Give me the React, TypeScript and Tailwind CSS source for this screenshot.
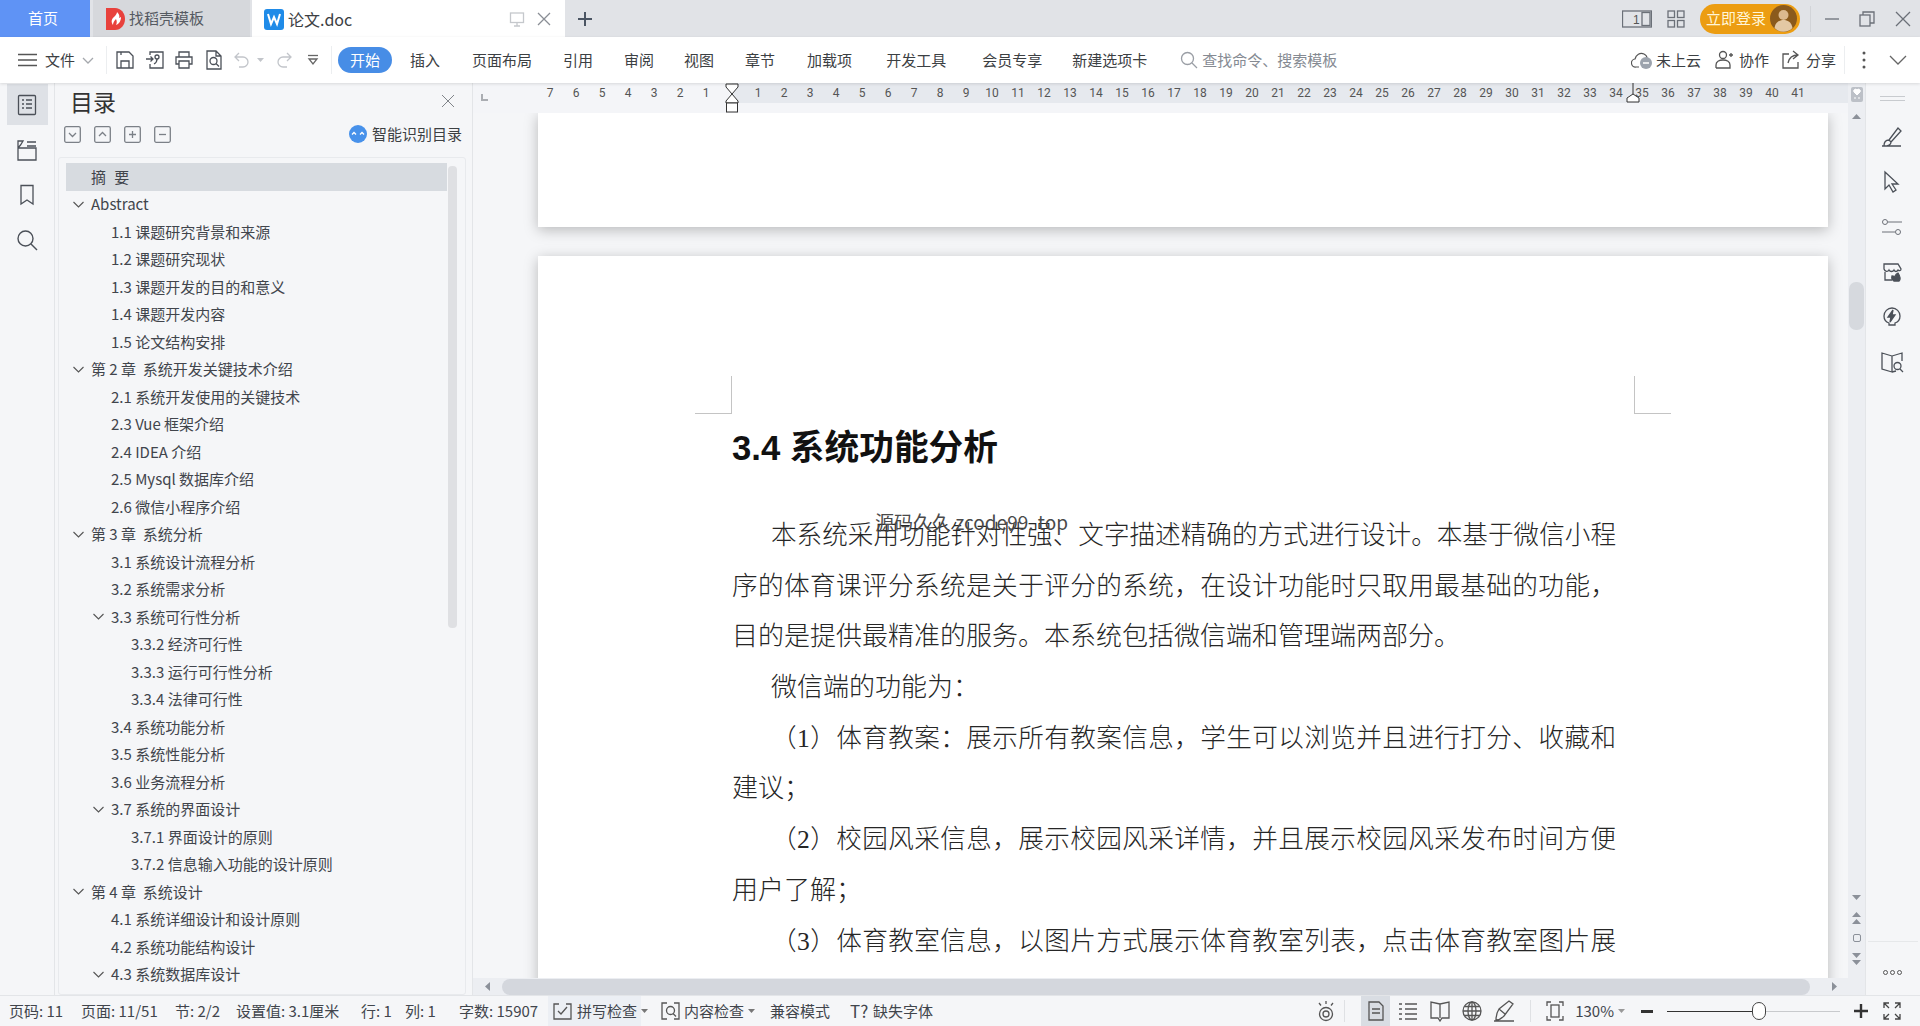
import React from "react";

const C = "#4b5058";
function I({ w = 20, h = 20, c = C, sw = 1.3, children, className = "" }: { w?: number; h?: number; c?: string; sw?: number; children: React.ReactNode; className?: string }) {
  return (
    <svg width={w} height={h} viewBox={`0 0 ${w} ${h}`} fill="none" stroke={c} strokeWidth={sw} className={`shrink-0 ${className}`}>
      {children}
    </svg>
  );
}

const toc: [number, boolean, string][] = [
  [0, false, "摘 要"],
  [0, true, "Abstract"],
  [1, false, "1.1 课题研究背景和来源"],
  [1, false, "1.2 课题研究现状"],
  [1, false, "1.3 课题开发的目的和意义"],
  [1, false, "1.4 课题开发内容"],
  [1, false, "1.5 论文结构安排"],
  [0, true, "第 2 章  系统开发关键技术介绍"],
  [1, false, "2.1 系统开发使用的关键技术"],
  [1, false, "2.3 Vue 框架介绍"],
  [1, false, "2.4 IDEA 介绍"],
  [1, false, "2.5 Mysql 数据库介绍"],
  [1, false, "2.6 微信小程序介绍"],
  [0, true, "第 3 章  系统分析"],
  [1, false, "3.1 系统设计流程分析"],
  [1, false, "3.2 系统需求分析"],
  [1, true, "3.3 系统可行性分析"],
  [2, false, "3.3.2 经济可行性"],
  [2, false, "3.3.3 运行可行性分析"],
  [2, false, "3.3.4 法律可行性"],
  [1, false, "3.4 系统功能分析"],
  [1, false, "3.5 系统性能分析"],
  [1, false, "3.6 业务流程分析"],
  [1, true, "3.7 系统的界面设计"],
  [2, false, "3.7.1 界面设计的原则"],
  [2, false, "3.7.2 信息输入功能的设计原则"],
  [0, true, "第 4 章  系统设计"],
  [1, false, "4.1 系统详细设计和设计原则"],
  [1, false, "4.2 系统功能结构设计"],
  [1, true, "4.3 系统数据库设计"],
];
const levelPad = ["pl-[7px]", "pl-[27px]", "pl-[47px]"];

const J = "w-[884px] whitespace-nowrap [text-align:justify] [text-align-last:justify] h-[50.7px] leading-[50.7px]";
const JI = "w-[884px] pl-[39px] whitespace-nowrap [text-align:justify] [text-align-last:justify] h-[50.7px] leading-[50.7px]";
const L = "text-[26px] whitespace-nowrap h-[50.7px] leading-[50.7px]";
const LI = "text-[26px] pl-[39px] whitespace-nowrap h-[50.7px] leading-[50.7px]";

function Caret({ c = "#777" }: { c?: string }) {
  return <svg width="7" height="4" viewBox="0 0 7 4" className="shrink-0"><path d="M0 0h7L3.5 4z" fill={c} /></svg>;
}

function Tabs() {
  return (
    <div className="h-[37px] flex bg-[#e1e3e7] text-[15px] items-stretch">
      <div className="w-[90px] mr-[3px] pr-[4px] bg-[#5f93f5] text-white flex items-center justify-center">首页</div>
      <div className="w-[157px] mr-[2px] bg-[#d6d8dc] text-[#555a62] flex items-center pl-[13px]">
        <svg width="19" height="24" viewBox="0 0 19 24" className="shrink-0">
          <path d="M0 1h9c6 0 10 5 10 11s-4 11-10 11H0z" fill="#e8413c" />
          <path d="M7 18c-2-3-2-6 2-9 1-1 2-3 2-4 2 2 3 4 2 6l2-1c0 4-2 7-5 8 1-2 1-4 0-6-2 2-3 4-3 6z" fill="#fff" />
        </svg>
        <span className="ml-[4px]">找稻壳模板</span>
      </div>
      <div className="w-[313px] bg-white text-[#3c4043] flex items-center pl-[12px]">
        <svg width="20" height="24" viewBox="0 0 20 24" className="shrink-0">
          <rect y="2" width="20" height="21" rx="3" fill="#1f8be8" />
          <path d="M4 7l3 10 3-7 3 7 3-10" fill="none" stroke="#fff" strokeWidth="2" />
        </svg>
        <span className="ml-[4px] text-[16px]">论文.doc</span>
        <I w={16} h={16} c="#c5c8cc" className="ml-[157px]"><rect x="1.5" y="2" width="13" height="9.5" /><path d="M8 11.5V15M5 15h6" /></I>
        <I w={16} h={16} c="#8a8e95" className="ml-[11px]"><path d="M2 2l12 12M14 2L2 14" /></I>
      </div>
      <div className="ml-[13px] flex items-center">
        <I w={14} h={14} c="#4b5563" sw={2}><path d="M7 0v14M0 7h14" /></I>
      </div>
      <div className="ml-auto pr-[9px] flex items-center">
        <I w={30} h={18} c="#6b7078">
          <rect x="0.5" y="1" width="29" height="16" />
          <rect x="20" y="2.5" width="8" height="13" />
          <text x="11" y="14" fontSize="12" fill="#555" stroke="none" fontFamily="Liberation Sans">1</text>
        </I>
        <I w={18} h={18} c="#6b7078" className="ml-[15px]">
          <rect x="1" y="1" width="6.5" height="6.5" /><rect x="10.5" y="1" width="6.5" height="6.5" /><rect x="1" y="10.5" width="6.5" height="6.5" /><rect x="10.5" y="10.5" width="6.5" height="6.5" />
        </I>
        <div className="ml-[15px] w-[100px] h-[30px] rounded-[15px] bg-[#ec9d12] flex items-center pl-[6px] text-[15px] text-[#fff6d8]">
          <span className="whitespace-nowrap">立即登录</span>
          <svg width="27" height="27" viewBox="0 0 27 27" className="ml-[4px] shrink-0">
            <circle cx="13.5" cy="13.5" r="13.5" fill="#8b5a1c" />
            <circle cx="13.5" cy="10" r="5" fill="#dcb98e" />
            <path d="M4.5 23c1-6 5-8 9-8s8 2 9 8c-5 5-13 5-18 0z" fill="#e3c8a4" />
          </svg>
        </div>
        <div className="ml-[10px] w-px h-[26px] bg-[#d2d4d8]" />
        <I w={14} h={14} c="#6b7078" className="ml-[14px]"><path d="M0 7h14" /></I>
        <I w={16} h={16} c="#6b7078" className="ml-[20px]"><rect x="1" y="4" width="10" height="11" /><path d="M4 4V1h11v11h-4" /></I>
        <I w={16} h={16} c="#6b7078" className="ml-[20px]"><path d="M1 1l14 14M15 1L1 15" /></I>
      </div>
    </div>
  );
}

function Toolbar() {
  const gray = "#c2c5ca";
  return (
    <div className="relative z-10 h-[46px] bg-white flex items-center pl-[18px] pr-[13px] text-[15px] text-[#3c4043] whitespace-nowrap shadow-[0_1px_3px_rgba(0,0,0,0.12)]">
      <I w={19} h={14} c="#555"><path d="M0 1.5h19M0 7h19M0 12.5h19" /></I>
      <span className="ml-[8px]">文件</span>
      <I w={12} h={7} c="#a5a8ad" className="ml-[7px]"><path d="M1 1l5 5 5-5" /></I>
      <div className="ml-[12px] w-px h-[28px] bg-[#eceef0]" />
      <I className="ml-[8px]"><path d="M2 2h12l4 4v12H2zM6 18v-7h8v7M6 2v3" /></I>
      <I className="ml-[10px]"><path d="M5 5V2h13v16H5v-4M1 9h7m-2.5-2.5L8 9l-2.5 2.5" /><circle cx="12" cy="7" r="2" /><path d="M12 9c0 3-1 4-3 5" /></I>
      <I className="ml-[9px]"><path d="M5 7V2h10v5M5 14H2V7h16v7h-3M5 11h10v7H5z" /></I>
      <I className="ml-[10px]"><path d="M3 1h9l5 5v13H3zM12 1v5h5" /><circle cx="9.5" cy="11" r="3.5" /><path d="M12 13.5l3 3" /></I>
      <I className="ml-[8px]" c={gray}><path d="M7 3L3 7l4 4M3 7h8a5 5 0 0 1 0 10H7" /></I>
      <span className="ml-[5px]"><Caret c={gray} /></span>
      <I className="ml-[10px]" c={gray}><path d="M13 3l4 4-4 4M17 7H9a5 5 0 0 0 0 10h4" /></I>
      <I w={12} h={12} className="ml-[13px]" c="#666"><path d="M1 1.5h10" /><path d="M2 5h8l-4 5z" /></I>
      <div className="ml-[12px] w-px h-[28px] bg-[#eceef0]" />
      <div className="ml-[6px] w-[54px] h-[26px] rounded-[13px] bg-[#478de6] text-white flex items-center justify-center">开始</div>
      <span className="ml-[18px]">插入</span>
      <span className="ml-[32px]">页面布局</span>
      <span className="ml-[31px]">引用</span>
      <span className="ml-[31px]">审阅</span>
      <span className="ml-[30px]">视图</span>
      <span className="ml-[31px]">章节</span>
      <span className="ml-[32px]">加载项</span>
      <span className="ml-[34px]">开发工具</span>
      <span className="ml-[36px]">会员专享</span>
      <span className="ml-[30px]">新建选项卡</span>
      <I w={18} h={18} c="#9a9ea5" className="ml-[33px]"><circle cx="7.5" cy="7.5" r="6" /><path d="M12 12l5 5" /></I>
      <span className="ml-[4px] text-[#858a92]">查找命令、搜索模板</span>
      <div className="ml-auto flex items-center">
        <svg width="22" height="20" viewBox="0 0 22 20" fill="none" stroke="#555" strokeWidth="1.2" className="shrink-0">
          <path d="M8 17H5a4 4 0 0 1-1-8c1-4 5-7 9-5 2 1 3 2 3 4" />
          <circle cx="15" cy="13" r="6" fill="#9ca3ad" stroke="none" />
          <path d="M12 13h6" stroke="#fff" strokeWidth="1.5" />
        </svg>
        <span className="ml-[3px]">未上云</span>
        <I className="ml-[13px]" c="#555"><circle cx="9" cy="5" r="3.5" /><path d="M2 18v-3c0-3 3-5 7-5s7 2 7 5v3H2M15 5h4M17 3v4" /></I>
        <span className="ml-[5px]">协作</span>
        <I className="ml-[12px]" c="#555"><path d="M8 4H2v14h15v-6M12 1l5 4-5 4M17 5c-6 0-9 3-10 8" /></I>
        <span className="ml-[5px]">分享</span>
        <div className="ml-[8px] w-px h-[28px] bg-[#eceef0]" />
        <svg width="4" height="18" viewBox="0 0 4 18" className="ml-[17px] shrink-0"><circle cx="2" cy="2" r="1.5" fill="#555" /><circle cx="2" cy="9" r="1.5" fill="#555" /><circle cx="2" cy="16" r="1.5" fill="#555" /></svg>
        <I w={18} h={10} c="#666" className="ml-[23px]"><path d="M1 1l8 8 8-8" /></I>
      </div>
    </div>
  );
}

function Rail() {
  return (
    <div className="w-[55px] shrink-0 border-r border-[#e3e5e8] flex flex-col items-center pt-[1px] gap-[4px]">
      <div className="w-[41px] h-[41px] bg-[#dee1e6] flex items-center justify-center">
        <I w={20} h={22} c="#4b5058"><rect x="1.5" y="1.5" width="17" height="19" rx="1" /><path d="M5 6h2M9 6h6M5 10h2M9 10h6M5 14h2M9 14h6" /></I>
      </div>
      <div className="w-[41px] h-[41px] flex items-center justify-center">
        <I w={22} h={22} c="#4b5058"><path d="M2 9h18v12H2zM2 9V2l5 0-2.5 4zM11 3h9M11 7h9" /></I>
      </div>
      <div className="w-[41px] h-[41px] flex items-center justify-center">
        <I w={16} h={22} c="#4b5058"><path d="M2 1.5h12V20l-6-4-6 4z" /></I>
      </div>
      <div className="w-[41px] h-[41px] flex items-center justify-center">
        <I w={22} h={22} c="#4b5058" sw={1.4}><circle cx="9.5" cy="9.5" r="7.5" /><path d="M15 15l6 6" /></I>
      </div>
    </div>
  );
}

function Sq({ d }: { d: string }) {
  return <I w={17} h={17} c="#7b8087"><rect x="0.7" y="0.7" width="15.6" height="15.6" rx="1.5" /><path d={d} /></I>;
}

function Panel() {
  return (
    <div className="w-[418px] shrink-0 border-r border-[#e3e5e8] flex flex-col h-full">
      <div className="h-[40px] shrink-0 flex items-center justify-between pl-[15px] pr-[16px] pb-[4px]">
        <span className="text-[23px] text-[#333]">目录</span>
        <I w={16} h={16} c="#808489" sw={1}><path d="M2 2l12 12M14 2L2 14" /></I>
      </div>
      <div className="h-[22px] shrink-0 flex items-center pl-[9px] pr-[10px] gap-[13px]">
        <Sq d="M5 7l3.5 3.5L12 7" />
        <Sq d="M5 10l3.5-3.5L12 10" />
        <Sq d="M8.5 5v7M5 8.5h7" />
        <Sq d="M5 8.5h7" />
        <div className="ml-auto flex items-center">
          <svg width="18" height="18" viewBox="0 0 18 18" className="shrink-0">
            <circle cx="9" cy="9" r="9" fill="#4791ea" />
            <path d="M3 9.5l2-2 2 2M11 9.5l2-2 2 2" stroke="#fff" strokeWidth="1.3" fill="none" />
          </svg>
          <span className="ml-[5px] text-[15px] text-[#3c4043] whitespace-nowrap">智能识别目录</span>
        </div>
      </div>
      <div className="mt-[12px] ml-[3px] w-[408px] flex-1 min-h-0 border border-[#e8eaed] rounded-[3px] flex pl-[7px] pt-[5px] overflow-hidden">
        <div className="w-[381px] shrink-0">
          {toc.map(([lv, chev, t], i) => (
            <div key={i} className={`h-[27.5px] flex items-center whitespace-pre text-[15px] text-[#41454c] ${levelPad[lv]} ${i === 0 ? "bg-[#d7dbe0] [word-spacing:5px]" : ""}`}>
              <span className="w-[12px] mr-[6px] shrink-0 flex items-center">
                {chev && <I w={11} h={7} c="#555" sw={1.1}><path d="M0.5 1l5 5 5-5" /></I>}
              </span>
              <span>{t}</span>
            </div>
          ))}
        </div>
        <div className="ml-[1px] mt-[3px] w-[9px] h-[462px] rounded-[4px] bg-[#dfe0e3]" />
      </div>
    </div>
  );
}

function Ruler() {
  const left = [7, 6, 5, 4, 3, 2, 1];
  const right = Array.from({ length: 41 }, (_, i) => i + 1);
  const cell = "w-[26px] shrink-0 text-center";
  return (
    <div className="relative h-[30px] shrink-0 bg-[#f4f5f8] flex items-start text-[12px] leading-[20px] text-[#555] font-['Roboto',sans-serif]">
      <div className="w-[64px] h-[20px] shrink-0 pl-[8px] pt-[11px]">
        <div className="w-[7px] h-[7px] border-l-2 border-b-2 border-[#aaadb2]" />
      </div>
      {left.map((n) => <div key={n} className={cell}>{n}</div>)}
      <div className="w-[13px] shrink-0" />
      <div className="flex-1 h-[20px] bg-[#e6e9ee] flex pl-[13px]">
        {right.map((n) => <div key={n} className={cell}>{n}</div>)}
      </div>
      <svg width="14" height="30" viewBox="0 0 14 30" fill="#fff" stroke="#333" strokeWidth="1" className="absolute left-[252px] top-0">
        <path d="M1 1h12v3l-6 7-6-7zM7 11l6 7v2H1v-2z" />
        <rect x="1.5" y="20" width="11" height="9" />
      </svg>
      <svg width="14" height="20" viewBox="0 0 14 20" fill="#fff" stroke="#333" strokeWidth="1" className="absolute left-[1153px] top-0">
        <path d="M7 0v11M7 11l6 4v4H1v-4z" />
      </svg>
    </div>
  );
}

function Page2() {
  return (
    <div className="mt-[29px] w-[1290px] h-[800px] bg-white shadow-[0_3px_13px_rgba(0,0,0,0.25)] pt-[120px]">
      <div className="flex justify-between px-[157px]">
        <div className="w-[37px] h-[38px] border-r border-b border-[#c4c4c4]" />
        <div className="w-[37px] h-[38px] border-l border-b border-[#c4c4c4]" />
      </div>
      <div className="relative pl-[194px] pt-[1px]">
        <div className="h-[66px] leading-[66px] text-[34.7px] font-bold text-[#111] whitespace-nowrap font-['Liberation_Sans','Noto_Sans_CJK_SC',sans-serif]">3.4 系统功能分析</div>
        <div className="mt-[30px] text-[25.6px] text-[#262626] font-light font-['Liberation_Serif','Noto_Sans_CJK_SC',serif]">
          <div className={JI}>本系统采用功能针对性强、文字描述精确的方式进行设计。本基于微信小程</div>
          <div className={J}>序的体育课评分系统是关于评分的系统，在设计功能时只取用最基础的功能，</div>
          <div className={L}>目的是提供最精准的服务。本系统包括微信端和管理端两部分。</div>
          <div className={LI}>微信端的功能为：</div>
          <div className={JI}>（1）体育教案：展示所有教案信息，学生可以浏览并且进行打分、收藏和</div>
          <div className={L}>建议；</div>
          <div className={JI}>（2）校园风采信息，展示校园风采详情，并且展示校园风采发布时间方便</div>
          <div className={L}>用户了解；</div>
          <div className={JI}>（3）体育教室信息，以图片方式展示体育教室列表，点击体育教室图片展</div>
        </div>
        <div className="absolute left-[337px] top-[95px] text-[19px] leading-[26px] text-[#4a4a4a] whitespace-nowrap font-['Noto_Sans_CJK_SC',sans-serif]">源码久久 zcode99. top</div>
      </div>
    </div>
  );
}

function Doc() {
  return (
    <div className="flex-1 min-w-0 flex h-full">
      <div className="w-[1375px] shrink-0 flex flex-col h-full">
        <Ruler />
        <div className="flex-1 min-h-0 overflow-hidden pl-[65px]">
          <div className="w-[1290px] h-[114px] bg-white shadow-[0_3px_13px_rgba(0,0,0,0.25)]" />
          <Page2 />
        </div>
        <div className="relative h-[17px] shrink-0 bg-[#eceef2] flex items-center pl-[12px]">
          <svg width="5" height="9" viewBox="0 0 5 9" className="shrink-0"><path d="M5 0v9L0 4.500z" fill="#8b9099" /></svg>
          <div className="ml-[12px] w-[1308px] h-[16px] rounded-[8px] bg-[#d4d7dd]" />
          <svg width="5" height="9" viewBox="0 0 5 9" className="ml-[22px] shrink-0"><path d="M0 0v9l5-4.500z" fill="#8b9099" /></svg>
        </div>
      </div>
      <div className="w-[17px] shrink-0 bg-[#eceef2] flex flex-col items-center">
        <svg width="12" height="15" viewBox="0 0 12 15" className="mt-[4px] shrink-0">
          <rect width="12" height="15" rx="2" fill="#bcc0c7" />
          <path d="M6 8L3 5a1.500 1.500 0 0 1 3-2 1.500 1.500 0 0 1 3 2zM3 11h2M7 11h2" fill="#fff" stroke="#fff" />
        </svg>
        <svg width="9" height="5" viewBox="0 0 9 5" className="mt-[12px] shrink-0"><path d="M0 5h9L4.500 0z" fill="#8b9099" /></svg>
        <div className="mt-[163px] w-[15px] h-[48px] rounded-[7px] bg-[#d6d9de]" />
        <svg width="9" height="5" viewBox="0 0 9 5" className="mt-[565px] shrink-0"><path d="M0 0h9L4.500 5z" fill="#8b9099" /></svg>
        <svg width="9" height="12" viewBox="0 0 9 12" className="mt-[12px] shrink-0"><path d="M0 5h9L4.500 0zM0 12h9L4.500 7z" fill="#8b9099" /></svg>
        <div className="mt-[10px] w-[8px] h-[8px] rounded-[2px] border border-[#8b9099]" />
        <svg width="9" height="12" viewBox="0 0 9 12" className="mt-[11px] shrink-0"><path d="M0 0h9L4.500 5zM0 7h9L4.500 12z" fill="#8b9099" /></svg>
      </div>
    </div>
  );
}

function RightRail() {
  const box = "h-[45px] flex items-center justify-center shrink-0";
  return (
    <div className="w-[55px] shrink-0 border-l border-[#e3e5e8] flex flex-col h-full pr-[2px]">
      <div className="h-[31.5px] shrink-0 flex flex-col items-center pt-[13px] gap-[2.5px]">
        <div className="w-[25px] h-px bg-[#c8cbcf]" />
        <div className="w-[25px] h-px bg-[#c8cbcf]" />
      </div>
      <div className={box}>
        <I w={22} h={22} c="#4b5058"><path d="M1 20h19M3 20c0-4 2-6 5-6l2 2c0 3-3 4-7 4zM8 14L17 2l3 3-10 11" /></I>
      </div>
      <div className={box}>
        <I w={18} h={24} c="#4b5058"><path d="M2 2v17l4-4 4 7 3-2-4-6h6z" /></I>
      </div>
      <div className={box}>
        <I w={22} h={20} c="#6d7178" sw={1}><circle cx="4" cy="5" r="2.500" /><path d="M7 5h14M1 15h13" /><circle cx="17" cy="15" r="2.500" /></I>
      </div>
      <div className={box}>
        <I w={22} h={22} c="#4b5058"><path d="M3 3h14l3 5c0 2-2 2-3 1-1 2-3 2-4 0-1 2-4 2-5 0-1 2-4 2-5-1zM4 11v8h7" /><path d="M13 20c0-4 2-7 4-8 2 3 3 6 1 8zM11 15c2 0 3 2 3 5-2 0-4-2-3-5z" fill="#4b5058" /></I>
      </div>
      <div className={box}>
        <I w={20} h={22} c="#4b5058"><path d="M7 19h6v-2c3-1 5-4 5-7a8 8 0 0 0-16 0c0 3 2 6 5 7z" /><path d="M11 4L6 11h3l-1 5 5-7h-3z" fill="#4b5058" /></I>
      </div>
      <div className={box}>
        <I w={24} h={22} c="#4b5058"><path d="M12 5L2 2v16l10 3V5zM12 5l10-3v8M12 21l4-1" /><circle cx="17.500" cy="15" r="3.500" /><path d="M20 18l3 3" /></I>
      </div>
      <div className="mt-auto h-px bg-[#e6e8ea] ml-[2px]" />
      <div className="h-[53px] shrink-0 flex items-center justify-center gap-[2px] pt-[8px]">
        <span className="w-[5px] h-[5px] rounded-full border border-[#555]" />
        <span className="w-[5px] h-[5px] rounded-full border border-[#555]" />
        <span className="w-[5px] h-[5px] rounded-full border border-[#555]" />
      </div>
    </div>
  );
}

function Status() {
  return (
    <div className="h-[31px] shrink-0 bg-[#f5f6f8] border-t border-[#e3e5e8] flex items-center pl-[9px] pr-[18px] text-[15px] text-[#41454c] whitespace-nowrap">
      <span className="w-[72px] shrink-0">页码: 11</span>
      <span className="w-[94px] shrink-0">页面: 11/51</span>
      <span className="w-[61px] shrink-0">节: 2/2</span>
      <span className="w-[125px] shrink-0">设置值: 3.1厘米</span>
      <span className="w-[44px] shrink-0">行: 1</span>
      <span className="w-[54px] shrink-0">列: 1</span>
      <span className="w-[89px] shrink-0">字数: 15907</span>
      <div className="w-[93px] h-[30px] shrink-0 bg-[#eceff4] flex items-center pl-[5px]">
        <I w={19} h={20} c="#555"><path d="M6 3H1v15h17V3h-5" /><path d="M5 10l3 3 6-7" /></I>
        <span className="ml-[5px]">拼写检查</span>
      </div>
      <span className="ml-[0px]"><Caret /></span>
      <I w={19} h={20} c="#555" className="ml-[13px]"><path d="M6 2H1v16h5M13 2h5v16h-5" /><circle cx="9.500" cy="9.500" r="4" /><path d="M12 12.500l3 3" /></I>
      <span className="ml-[4px]">内容检查</span>
      <span className="ml-[4px]"><Caret /></span>
      <span className="ml-[15px]">兼容模式</span>
      <span className="ml-[20px] w-[23px] text-[17px] shrink-0">T?</span>
      <span>缺失字体</span>
      <div className="ml-auto flex items-center">
        <I w={22} h={22} c="#555"><circle cx="11" cy="14" r="6.500" /><circle cx="11" cy="14" r="3" /><path d="M11 1v3M4 3l2 2.500M18 3l-2 2.500" /></I>
        <div className="ml-[7px] w-px h-[22px] bg-[#dfe1e4]" />
        <div className="ml-[16px] w-[29px] h-[30px] bg-[#d9dde3] flex items-center justify-center">
          <I w={16} h={20} c="#555"><path d="M1 1h10l4 4v14H1zM4 8h8M4 12h8" /></I>
        </div>
        <I w={20} h={20} c="#555" className="ml-[8px]"><path d="M1 3h3M7 3h12M1 8h3M7 8h12M1 13h3M7 13h12M1 18h3M7 18h12" /></I>
        <I w={20} h={22} c="#555" className="ml-[12px]"><path d="M10 4L1 2v16h7l2 3 2-3h7V2zM10 4v14" /></I>
        <I w={20} h={20} c="#555" className="ml-[12px]"><circle cx="10" cy="10" r="9" /><ellipse cx="10" cy="10" rx="4" ry="9" /><path d="M1 10h18M2.500 5.500h15M2.500 14.500h15M10 1v18" /></I>
        <I w={22} h={22} c="#555" className="ml-[11px]"><path d="M1 21h20M3 20c0-5 1-8 3-11L16 1l4 3-9 12c-2 2-5 4-8 4zM6 9l6 5" /></I>
        <div className="ml-[15px] w-px h-[22px] bg-[#dfe1e4]" />
        <I w={18} h={20} c="#555" className="ml-[15px]"><path d="M1 5V1h4M13 1h4v4M17 15v4h-4M5 19H1v-4" /><rect x="5" y="4" width="8" height="12" /></I>
        <span className="ml-[11px]">130%</span>
        <span className="ml-[4px]"><Caret c="#999" /></span>
        <div className="ml-[16px] w-[12px] h-[3px] bg-[#333] shrink-0" />
        <div className="ml-[14px] relative w-[173px] h-[18px] flex items-center shrink-0">
          <div className="w-[92px] h-px bg-[#333]" />
          <div className="flex-1 h-px bg-[#c8cacd]" />
          <div className="absolute left-[85px] top-0 w-[14px] h-[18px] rounded-[7px] border border-[#444] bg-white" />
        </div>
        <I w={14} h={14} c="#333" sw={2.4} className="ml-[14px]"><path d="M7 0v14M0 7h14" /></I>
        <I w={20} h={20} c="#444" className="ml-[14px]"><path d="M2 7V2h5M2 2l5 5M13 2h5v5M18 2l-5 5M2 13v5h5M2 18l5-5M18 13v5h-5M18 18l-5-5" /></I>
      </div>
    </div>
  );
}

export default function App() {
  return (
    <div className="w-[1920px] h-[1026px] overflow-hidden flex flex-col bg-[#f5f6f8] font-['Noto_Sans_CJK_SC','Noto_Sans',sans-serif]">
      <Tabs />
      <Toolbar />
      <div className="flex-1 min-h-0 flex">
        <Rail />
        <Panel />
        <Doc />
        <RightRail />
      </div>
      <Status />
    </div>
  );
}
